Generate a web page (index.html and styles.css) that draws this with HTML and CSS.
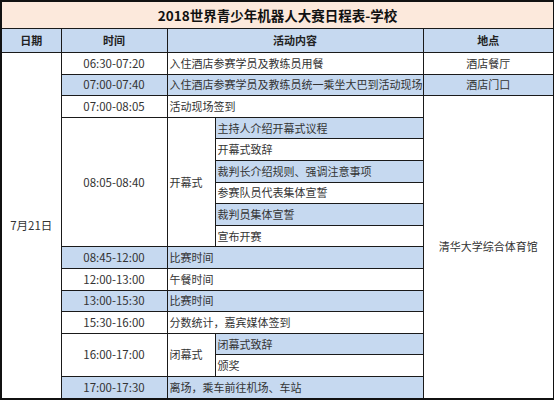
FILE: index.html
```html
<!DOCTYPE html>
<html lang="zh">
<head>
<meta charset="utf-8">
<title>2018世界青少年机器人大赛日程表-学校</title>
<link rel="stylesheet" href="styles.css">
</head>
<body>
<table class="sched">
  <colgroup>
    <col class="c-date">
    <col class="c-time">
    <col class="c-sub">
    <col class="c-act">
    <col class="c-loc">
  </colgroup>
  <tr class="r-title"><td colspan="5" class="title">2018世界青少年机器人大赛日程表-学校</td></tr>
  <tr class="r-head blue">
    <th>日期</th><th>时间</th><th colspan="2">活动内容</th><th>地点</th>
  </tr>
  <tr>
    <td rowspan="16" class="date">7月21日</td>
    <td class="time">06:30-07:20</td>
    <td colspan="2" class="act">入住酒店参赛学员及教练员用餐</td>
    <td class="loc">酒店餐厅</td>
  </tr>
  <tr class="blue">
    <td class="time">07:00-07:40</td>
    <td colspan="2" class="act">入住酒店参赛学员及教练员统一乘坐大巴到活动现场</td>
    <td class="loc">酒店门口</td>
  </tr>
  <tr>
    <td class="time">07:00-08:05</td>
    <td colspan="2" class="act">活动现场签到</td>
    <td rowspan="14" class="loc white">清华大学综合体育馆</td>
  </tr>
  <tr>
    <td rowspan="6" class="time white">08:05-08:40</td>
    <td rowspan="6" class="act white">开幕式</td>
    <td class="act blue">主持人介绍开幕式议程</td>
  </tr>
  <tr><td class="act">开幕式致辞</td></tr>
  <tr><td class="act blue">裁判长介绍规则、强调注意事项</td></tr>
  <tr><td class="act">参赛队员代表集体宣誓</td></tr>
  <tr><td class="act blue">裁判员集体宣誓</td></tr>
  <tr><td class="act">宣布开赛</td></tr>
  <tr class="blue">
    <td class="time">08:45-12:00</td>
    <td colspan="2" class="act">比赛时间</td>
  </tr>
  <tr>
    <td class="time">12:00-13:00</td>
    <td colspan="2" class="act">午餐时间</td>
  </tr>
  <tr class="blue">
    <td class="time">13:00-15:30</td>
    <td colspan="2" class="act">比赛时间</td>
  </tr>
  <tr>
    <td class="time">15:30-16:00</td>
    <td colspan="2" class="act">分数统计，嘉宾媒体签到</td>
  </tr>
  <tr>
    <td rowspan="2" class="time white">16:00-17:00</td>
    <td rowspan="2" class="act white">闭幕式</td>
    <td class="act blue">闭幕式致辞</td>
  </tr>
  <tr><td class="act">颁奖</td></tr>
  <tr class="blue">
    <td class="time">17:00-17:30</td>
    <td colspan="2" class="act">离场，乘车前往机场、车站</td>
  </tr>
</table>
</body>
</html>
```

FILE: styles.css
```css
html, body {
  margin: 0;
  padding: 0;
  background: #ffffff;
}

.sched {
  border-collapse: collapse;
  table-layout: fixed;
  width: 553px;
  border: 2px solid #111;
  font-family: "Noto Sans CJK SC", "Microsoft YaHei", sans-serif;
  font-size: 11px;
  color: #333;
}

.c-date { width: 60px; }
.c-time { width: 106px; }
.c-sub  { width: 48px; }
.c-act  { width: 208px; }
.c-loc  { width: 131px; }

.sched td, .sched th {
  border: 1px solid #1a1a1a;
  padding: 0 2px;
  height: 20.6px;
  line-height: 13px;
  white-space: nowrap;
  overflow: hidden;
}

.r-title td {
  height: 26px;
}

.title {
  background: #fce9dc;
  text-align: center;
  font-size: 13.5px;
  font-weight: bold;
  color: #111;
}

.r-head th {
  height: 23px;
  font-weight: bold;
  color: #222;
  font-size: 11px;
}

.blue td, .blue th, td.blue {
  background: #c6d9f0;
}

td.white, .blue td.white {
  background: #ffffff;
}

.date {
  background: #ffffff;
  text-align: center;
  vertical-align: middle;
  padding-bottom: 8px;
  font-size: 11.5px;
}

.time {
  text-align: center;
  font-size: 11.5px;
}

.act {
  text-align: left;
}

.loc {
  text-align: center;
}
```
